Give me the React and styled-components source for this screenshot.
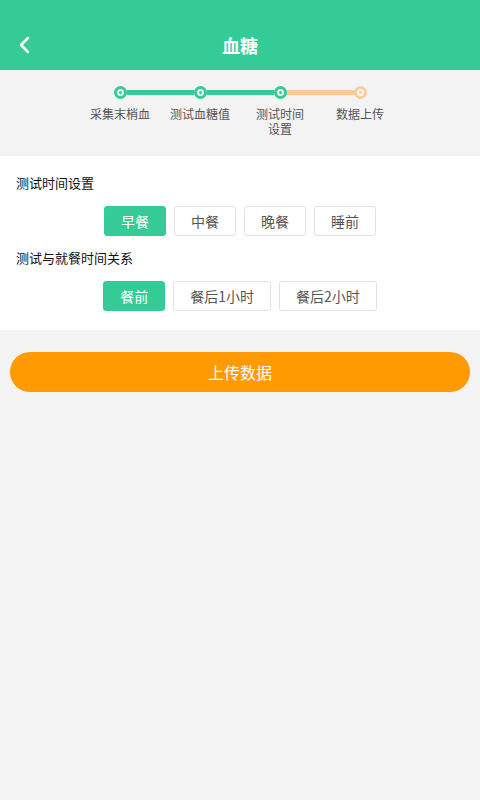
import styled, { createGlobalStyle } from "styled-components";
import { useState } from "react";

const GREEN = "#34cb97";
const PEACH = "#fbcb9d";
const ORANGE = "#ff9a03";

const GlobalStyle = createGlobalStyle`
  html, body {
    margin: 0;
    padding: 0;
    background: #f3f3f3;
    font-family: "Noto Sans CJK SC", "Noto Sans", sans-serif;
  }
  * { box-sizing: border-box; }
`;

const Page = styled.div`
  width: 480px;
  min-height: 800px;
  background: #f3f3f3;
`;

const Header = styled.div`
  height: 70px;
  background: ${GREEN};
  display: flex;
  align-items: center;
  padding-top: 20px;
`;

const Back = styled.div`
  width: 50px;
  display: flex;
  justify-content: center;
  padding-right: 1px;
`;

const Title = styled.div`
  flex: 1;
  text-align: center;
  color: #fff;
  font-size: 18px;
  font-weight: 700;
  margin-right: 50px;
  line-height: 1;
`;

const Steps = styled.div`
  display: flex;
  justify-content: center;
  padding: 16px 0 0;
  height: 86px;
`;

const Step = styled.div`
  width: 80px;
  display: flex;
  flex-direction: column;
  align-items: center;
`;

const Track = styled.div`
  width: 100%;
  display: flex;
  align-items: center;
  height: 13px;
`;

const Half = styled.div`
  flex: 1;
  height: 5px;
  background: ${(p) => p.$color || "transparent"};
`;

const Dot = styled.div`
  width: 13px;
  height: 13px;
  border-radius: 50%;
  background: ${(p) => p.$color};
  display: flex;
  align-items: center;
  justify-content: center;
  &::after {
    content: "";
    width: 3px;
    height: 3px;
    border-radius: 50%;
    background: ${(p) => p.$color};
    border: 2px solid rgba(255, 255, 255, 0.85);
  }
`;

const StepLabel = styled.div`
  margin-top: 7px;
  font-size: 12px;
  line-height: 15px;
  color: #555;
  text-align: center;
  white-space: pre-line;
`;

const Panel = styled.div`
  background: #fff;
  padding: 17px 16px 19px;
`;

const Label = styled.div`
  font-size: 13px;
  line-height: 20px;
  color: #111;
  margin-top: ${(p) => (p.$first ? 0 : "12px")};
`;

const Options = styled.div`
  display: flex;
  justify-content: center;
  gap: 8px;
  margin-top: 13px;
`;

const Option = styled.button`
  height: 30px;
  padding: 0 16px;
  border-radius: 3px;
  border: 1px solid ${(p) => (p.$active ? GREEN : "#e2e2e2")};
  background: ${(p) => (p.$active ? GREEN : "#fff")};
  color: ${(p) => (p.$active ? "#fff" : "#555")};
  font-family: inherit;
  font-size: 14px;
  min-width: 61px;
  cursor: pointer;
`;

const Upload = styled.button`
  display: block;
  margin: 22px 10px 0;
  width: 460px;
  height: 40px;
  border: none;
  border-radius: 20px;
  background: ${ORANGE};
  color: #fff;
  font-family: inherit;
  font-size: 16px;
  cursor: pointer;
`;

const steps = ["采集末梢血", "测试血糖值", "测试时间\n设置", "数据上传"];
const segments = [GREEN, GREEN, PEACH];
const times = ["早餐", "中餐", "晚餐", "睡前"];
const relations = ["餐前", "餐后1小时", "餐后2小时"];

export default function App() {
  const [time, setTime] = useState(0);
  const [rel, setRel] = useState(0);

  return (
    <Page>
      <GlobalStyle />
      <Header>
        <Back>
          <svg width="14" height="18" viewBox="0 0 14 18">
            <path d="M10 2 L3 9 L10 16" fill="none" stroke="#fff" strokeWidth="2.6" strokeLinecap="round" strokeLinejoin="round" />
          </svg>
        </Back>
        <Title>血糖</Title>
      </Header>

      <Steps>
        {steps.map((s, i) => (
          <Step key={s}>
            <Track>
              <Half $color={i > 0 ? segments[i - 1] : null} />
              <Dot $color={i < 3 ? GREEN : PEACH} />
              <Half $color={i < 3 ? segments[i] : null} />
            </Track>
            <StepLabel>{s}</StepLabel>
          </Step>
        ))}
      </Steps>

      <Panel>
        <Label $first>测试时间设置</Label>
        <Options>
          {times.map((t, i) => (
            <Option key={t} $active={time === i} onClick={() => setTime(i)}>
              {t}
            </Option>
          ))}
        </Options>
        <Label>测试与就餐时间关系</Label>
        <Options>
          {relations.map((t, i) => (
            <Option key={t} $active={rel === i} onClick={() => setRel(i)}>
              {t}
            </Option>
          ))}
        </Options>
      </Panel>

      <Upload>上传数据</Upload>
    </Page>
  );
}
